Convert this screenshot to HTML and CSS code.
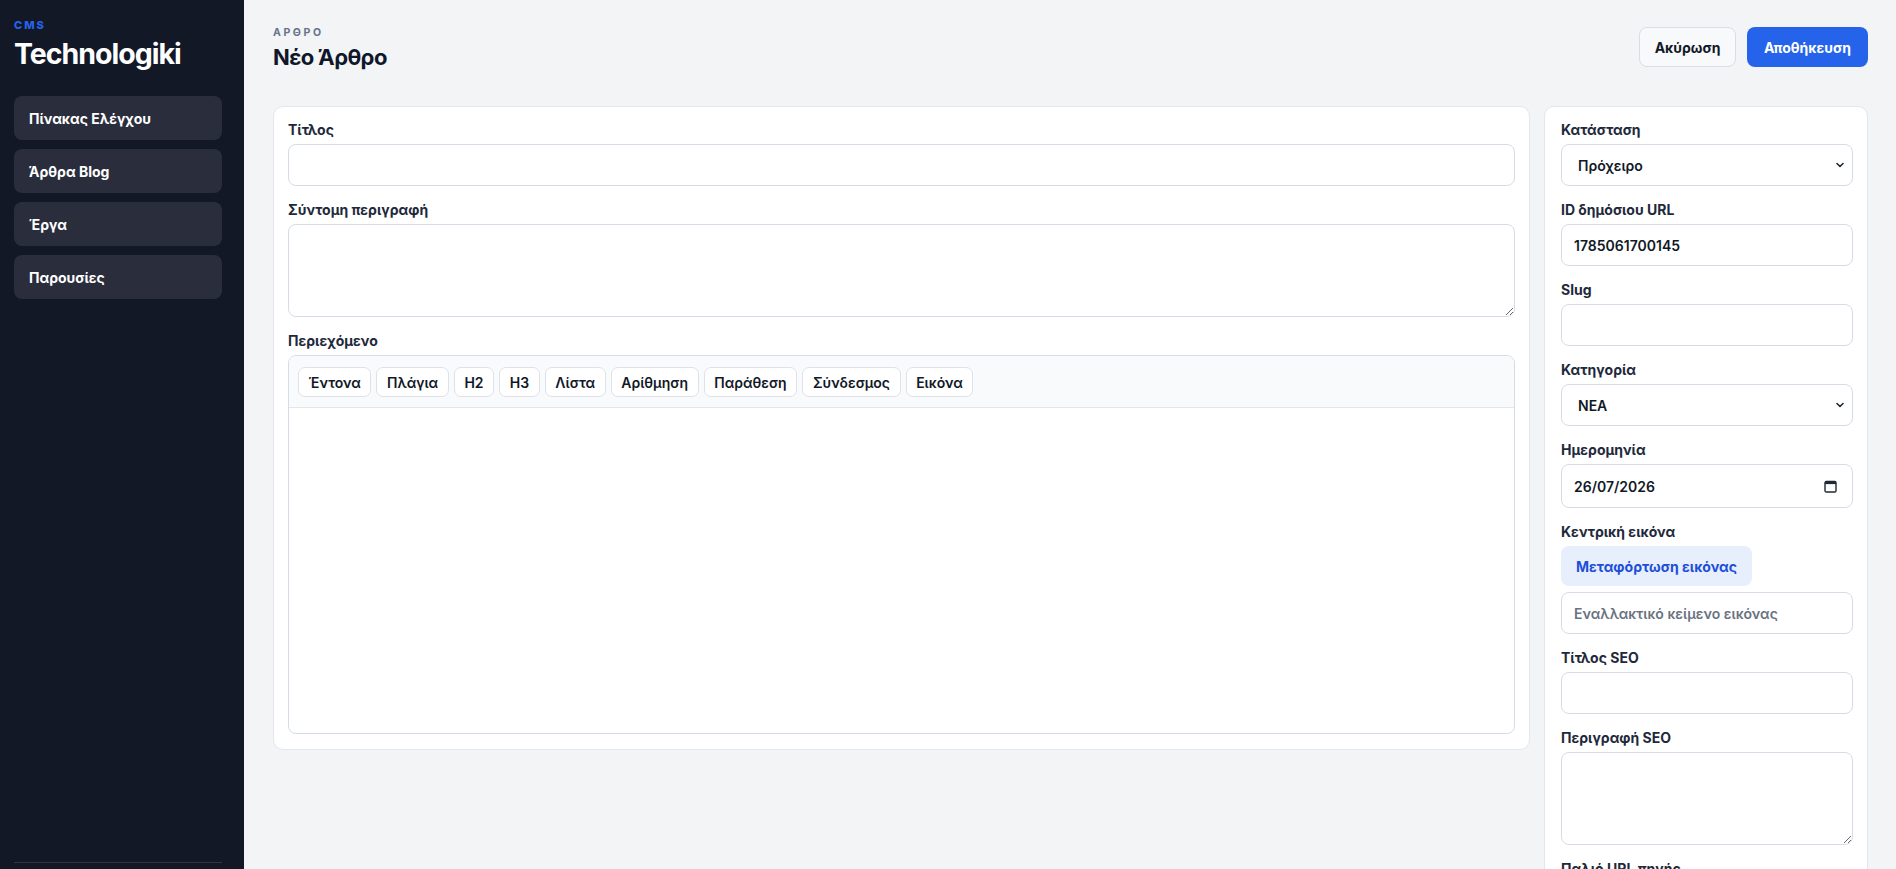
FILE: index.html
```html
<!DOCTYPE html>
<html lang="el">
<head>
    <meta charset="UTF-8">
    <meta name="viewport" content="width=device-width, initial-scale=1">
    <title>Νέο Άρθρο – Technologiki CMS</title>
    <link rel="stylesheet" href="styles.css">
</head>
<body>
    <div class="layout">
        <aside class="sidebar">
            <div class="brand-eyebrow">CMS</div>
            <div class="brand">Technologiki</div>

            <nav class="nav">
                <a href="#" class="nav-item">Πίνακας Ελέγχου</a>
                <a href="#" class="nav-item">Άρθρα Blog</a>
                <a href="#" class="nav-item">Έργα</a>
                <a href="#" class="nav-item">Παρουσίες</a>
            </nav>

            <div class="sidebar-footer"></div>
        </aside>

        <main class="main">
            <header class="page-header">
                <div>
                    <div class="eyebrow">ΑΡΘΡΟ</div>
                    <h1>Νέο Άρθρο</h1>
                </div>
                <div class="actions">
                    <button class="btn btn-ghost" type="button">Ακύρωση</button>
                    <button class="btn btn-primary" type="submit">Αποθήκευση</button>
                </div>
            </header>

            <div class="editor-grid">
                <section class="card">
                    <div class="field">
                        <label for="title">Τίτλος</label>
                        <input id="title" type="text">
                    </div>
                    <div class="field">
                        <label for="excerpt">Σύντομη περιγραφή</label>
                        <textarea id="excerpt"></textarea>
                    </div>
                    <div class="field last">
                        <label>Περιεχόμενο</label>
                        <div class="rich-editor">
                            <div class="toolbar">
                                <button type="button">Έντονα</button>
                                <button type="button">Πλάγια</button>
                                <button type="button">H2</button>
                                <button type="button">H3</button>
                                <button type="button">Λίστα</button>
                                <button type="button">Αρίθμηση</button>
                                <button type="button">Παράθεση</button>
                                <button type="button">Σύνδεσμος</button>
                                <button type="button">Εικόνα</button>
                            </div>
                            <div class="editor-body" contenteditable="true"></div>
                        </div>
                    </div>
                </section>

                <aside class="card side-card">
                    <div class="field">
                        <label for="status">Κατάσταση</label>
                        <div class="select-wrap">
                            <select id="status">
                                <option>Πρόχειρο</option>
                                <option>Δημοσιευμένο</option>
                            </select>
                            <svg class="chevron" width="10" height="10" viewBox="0 0 10 10"><path d="M2 3.5l3 3 3-3" fill="none" stroke="#1f2937" stroke-width="1.6" stroke-linecap="round" stroke-linejoin="round"/></svg>
                        </div>
                    </div>
                    <div class="field">
                        <label for="publicId">ID δημόσιου URL</label>
                        <input id="publicId" type="text" value="1785061700145">
                    </div>
                    <div class="field">
                        <label for="slug">Slug</label>
                        <input id="slug" type="text">
                    </div>
                    <div class="field">
                        <label for="category">Κατηγορία</label>
                        <div class="select-wrap">
                            <select id="category">
                                <option>ΝΕΑ</option>
                                <option>ΕΡΓΑ</option>
                            </select>
                            <svg class="chevron" width="10" height="10" viewBox="0 0 10 10"><path d="M2 3.5l3 3 3-3" fill="none" stroke="#1f2937" stroke-width="1.6" stroke-linecap="round" stroke-linejoin="round"/></svg>
                        </div>
                    </div>
                    <div class="field">
                        <label for="date">Ημερομηνία</label>
                        <div class="date-wrap">
                            <input id="date" class="date-input" type="text" value="26/07/2026">
                            <svg class="calendar" width="13" height="13" viewBox="0 0 13 13"><rect x="1" y="1.5" width="11" height="10.5" rx="1.3" fill="none" stroke="#1f2937" stroke-width="1.4"/><rect x="1" y="1.5" width="11" height="2.6" fill="#1f2937"/></svg>
                        </div>
                    </div>
                    <div class="field">
                        <label>Κεντρική εικόνα</label>
                        <button class="upload-btn" type="button">Μεταφόρτωση εικόνας</button>
                        <input type="text" placeholder="Εναλλακτικό κείμενο εικόνας">
                    </div>
                    <div class="field">
                        <label for="seoTitle">Τίτλος SEO</label>
                        <input id="seoTitle" type="text">
                    </div>
                    <div class="field">
                        <label for="seoDesc">Περιγραφή SEO</label>
                        <textarea id="seoDesc"></textarea>
                    </div>
                    <div class="field last">
                        <label for="sourceUrl">Παλιό URL πηγής</label>
                        <input id="sourceUrl" type="text">
                    </div>
                </aside>
            </div>
        </main>
    </div>
</body>
</html>
```

FILE: styles.css
```css
* {
    margin: 0;
    padding: 0;
    box-sizing: border-box;
}

html, body {
    font-family: Inter, 'Noto Sans', sans-serif;
    color: #111827;
    background: #f3f4f6;
}

.layout {
    display: grid;
    grid-template-columns: 244px 1fr;
    min-height: 100vh;
}

/* sidebar */
.sidebar {
    position: sticky;
    top: 0;
    height: 100vh;
    background: #131827;
    padding: 19px 22px 0 14px;
    display: flex;
    flex-direction: column;
}

.brand-eyebrow {
    font-size: 11px;
    line-height: 13px;
    font-weight: 800;
    letter-spacing: 2px;
    color: #2563eb;
    margin-bottom: 4px;
}

.brand {
    font-size: 28.5px;
    line-height: 35px;
    font-weight: 700;
    letter-spacing: -1px;
    color: #fff;
}

.nav {
    margin-top: 25px;
    display: flex;
    flex-direction: column;
    gap: 9px;
}

.nav-item {
    display: flex;
    align-items: center;
    height: 44px;
    padding: 0 15px;
    border-radius: 8px;
    background: #2a2d3b;
    color: #fff;
    font-size: 14px;
    font-weight: 700;
    text-decoration: none;
}

.sidebar-footer {
    margin-top: auto;
    height: 7px;
    border-top: 1px solid #2f3346;
}

/* main */
.main {
    padding: 26px 28px 28px 29px;
}

.page-header {
    display: flex;
    justify-content: space-between;
    align-items: flex-start;
    margin-bottom: 35px;
}

.eyebrow {
    font-size: 10.5px;
    line-height: 13px;
    font-weight: 700;
    letter-spacing: 2.6px;
    color: #64748b;
    margin-bottom: 4px;
}

.page-header h1 {
    font-size: 22px;
    line-height: 28px;
    font-weight: 700;
    color: #0f172a;
    letter-spacing: -0.6px;
}

.actions { display: flex; gap: 11px; margin-top: 1px; }

.btn {
    height: 40px;
    border-radius: 8px;
    font-family: inherit;
    font-size: 14px;
    font-weight: 700;
    cursor: pointer;
}
.btn-ghost { padding: 0 14.5px; background: #f8f9fb; border: 1px solid #d8dde6; color: #111827; }
.btn-primary { padding: 0 17px; background: #2563eb; border: none; color: #fff; }

.editor-grid {
    display: grid;
    grid-template-columns: 1fr 324px;
    gap: 14px;
    align-items: start;
}

.card {
    background: #fff;
    border: 1px solid #e2e6ee;
    border-radius: 10px;
    padding: 13px 14px 15px;
}
.side-card { padding: 13px 14px 13px 16px; }

.field { margin-bottom: 14px; }
.field.last { margin-bottom: 0; }

.field label {
    display: block;
    font-size: 14px;
    line-height: 20px;
    font-weight: 700;
    color: #1e293b;
    margin-bottom: 4px;
}

.field input, .field textarea, .field select {
    display: block;
    width: 100%;
    height: 42px;
    padding: 0 12px;
    border: 1px solid #d6dce6;
    border-radius: 8px;
    background: #fff;
    font-family: inherit;
    font-size: 14px;
    font-weight: 600;
    color: #111827;
    outline: none;
}

.field textarea { height: 93px; padding: 10px 12px; resize: vertical; }
.field input::placeholder { color: #6b7280; }
.field .date-input { height: 44px; }

.select-wrap, .date-wrap { position: relative; }
.field select { appearance: none; padding-left: 16px; }
.chevron { position: absolute; right: 8px; top: 16px; pointer-events: none; }
.calendar { position: absolute; right: 16px; top: 16px; pointer-events: none; }

.upload-btn {
    display: block;
    height: 40px;
    padding: 0 15px;
    margin-bottom: 6px;
    border: none;
    border-radius: 8px;
    background: #e7eefc;
    color: #1d4ed8;
    font-family: inherit;
    font-size: 14px;
    font-weight: 700;
    cursor: pointer;
}

/* rich text editor */
.rich-editor {
    border: 1px solid #d6dce6;
    border-radius: 8px;
    overflow: hidden;
}

.toolbar {
    display: flex;
    flex-wrap: wrap;
    gap: 5px;
    padding: 11px 9px 10px;
    background: #f8fafc;
    border-bottom: 1px solid #e2e6ee;
}

.toolbar button {
    height: 30px;
    padding: 0 9.6px;
    background: #fff;
    border: 1px solid #dde2ea;
    border-radius: 7px;
    font-family: inherit;
    font-size: 14px;
    font-weight: 600;
    color: #111827;
    cursor: pointer;
}

.editor-body {
    min-height: 325px;
    padding: 12px;
    font-size: 15px;
    outline: none;
}
```
